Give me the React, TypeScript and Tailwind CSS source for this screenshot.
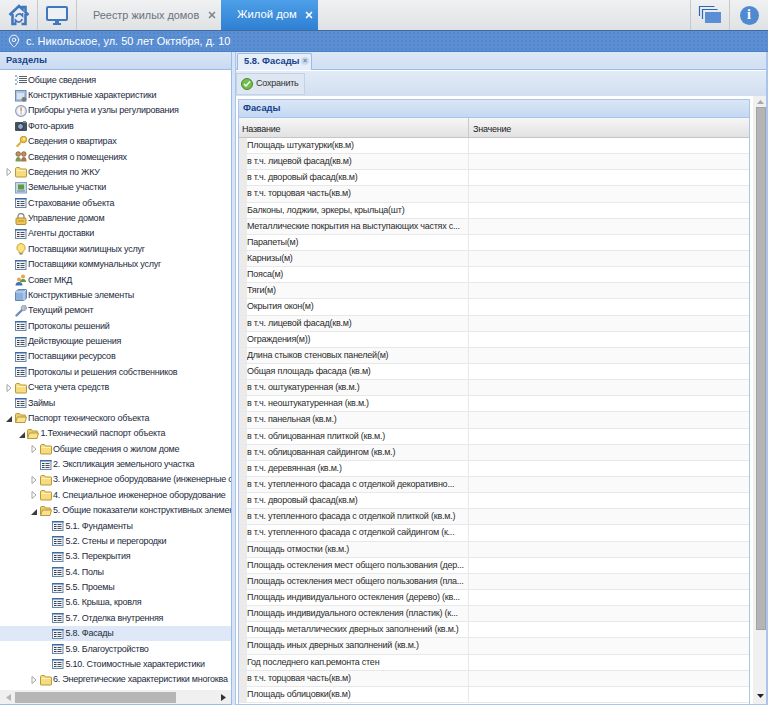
import { MapPin, X } from "lucide-react";

type IconKind =
  | "list" | "specs" | "meter" | "photo" | "key" | "people" | "folder" | "open" | "land"
  | "form" | "lock" | "bulb" | "users" | "cube" | "wrench";

type TreeRow = { label: string; icon: IconKind; level: number; arrow?: "closed" | "open"; selected?: boolean };

const treeRows: TreeRow[] = [
  { label: "Общие сведения", icon: "list", level: 0 },
  { label: "Конструктивные характеристики", icon: "specs", level: 0 },
  { label: "Приборы учета и узлы регулирования", icon: "meter", level: 0 },
  { label: "Фото-архив", icon: "photo", level: 0 },
  { label: "Сведения о квартирах", icon: "key", level: 0 },
  { label: "Сведения о помещениях", icon: "people", level: 0 },
  { label: "Сведения по ЖКУ", icon: "folder", level: 0, arrow: "closed" },
  { label: "Земельные участки", icon: "land", level: 0 },
  { label: "Страхование объекта", icon: "form", level: 0 },
  { label: "Управление домом", icon: "lock", level: 0 },
  { label: "Агенты доставки", icon: "form", level: 0 },
  { label: "Поставщики жилищных услуг", icon: "bulb", level: 0 },
  { label: "Поставщики коммунальных услуг", icon: "form", level: 0 },
  { label: "Совет МКД", icon: "users", level: 0 },
  { label: "Конструктивные элементы", icon: "cube", level: 0 },
  { label: "Текущий ремонт", icon: "wrench", level: 0 },
  { label: "Протоколы решений", icon: "form", level: 0 },
  { label: "Действующие решения", icon: "form", level: 0 },
  { label: "Поставщики ресурсов", icon: "form", level: 0 },
  { label: "Протоколы и решения собственников", icon: "form", level: 0 },
  { label: "Счета учета средств", icon: "folder", level: 0, arrow: "closed" },
  { label: "Займы", icon: "form", level: 0 },
  { label: "Паспорт технического объекта", icon: "open", level: 0, arrow: "open" },
  { label: "1.Технический паспорт объекта", icon: "open", level: 1, arrow: "open" },
  { label: "Общие сведения о жилом доме", icon: "folder", level: 2, arrow: "closed" },
  { label: "2. Экспликация земельного участка", icon: "form", level: 2 },
  // the next labels are cut by the panel edge in the real page
  { label: "3. Инженерное оборудование (инженерные с", icon: "folder", level: 2, arrow: "closed" },
  { label: "4. Специальное инженерное оборудование", icon: "folder", level: 2, arrow: "closed" },
  { label: "5. Общие показатели конструктивных элемен", icon: "open", level: 2, arrow: "open" },
  { label: "5.1. Фундаменты", icon: "form", level: 3 },
  { label: "5.2. Стены и перегородки", icon: "form", level: 3 },
  { label: "5.3. Перекрытия", icon: "form", level: 3 },
  { label: "5.4. Полы", icon: "form", level: 3 },
  { label: "5.5. Проемы", icon: "form", level: 3 },
  { label: "5.6. Крыша, кровля", icon: "form", level: 3 },
  { label: "5.7. Отделка внутренняя", icon: "form", level: 3 },
  { label: "5.8. Фасады", icon: "form", level: 3, selected: true },
  { label: "5.9. Благоустройство", icon: "form", level: 3 },
  { label: "5.10. Стоимостные характеристики", icon: "form", level: 3 },
  { label: "6. Энергетические характеристики многоква", icon: "folder", level: 2, arrow: "closed" },
];

const facadeRows = [
  "Площадь штукатурки(кв.м)",
  "в т.ч. лицевой фасад(кв.м)",
  "в т.ч. дворовый фасад(кв.м)",
  "в т.ч. торцовая часть(кв.м)",
  "Балконы, лоджии, эркеры, крыльца(шт)",
  "Металлические покрытия на выступающих частях с...",
  "Парапеты(м)",
  "Карнизы(м)",
  "Пояса(м)",
  "Тяги(м)",
  "Окрытия окон(м)",
  "в т.ч. лицевой фасад(кв.м)",
  "Ограждения(м))",
  "Длина стыков стеновых панелей(м)",
  "Общая площадь фасада (кв.м)",
  "в т.ч. оштукатуренная (кв.м.)",
  "в т.ч. неоштукатуренная (кв.м.)",
  "в т.ч. панельная (кв.м.)",
  "в т.ч. облицованная плиткой (кв.м.)",
  "в т.ч. облицованная сайдингом (кв.м.)",
  "в т.ч. деревянная (кв.м.)",
  "в т.ч. утепленного фасада с отделкой декоративно...",
  "в т.ч. дворовый фасад(кв.м)",
  "в т.ч. утепленного фасада с отделкой плиткой (кв.м.)",
  "в т.ч. утепленного фасада с отделкой сайдингом (к...",
  "Площадь отмостки (кв.м.)",
  "Площадь остекления мест общего пользования (дер...",
  "Площадь остекления мест общего пользования (пла...",
  "Площадь индивидуального остекления (дерево) (кв...",
  "Площадь индивидуального остекления (пластик) (к...",
  "Площадь металлических дверных заполнений (кв.м.)",
  "Площадь иных дверных заполнений (кв.м.)",
  "Год последнего кап.ремонта стен",
  "в т.ч. торцовая часть(кв.м)",
  "Площадь облицовки(кв.м)",
];

function NodeIcon({ kind }: { kind: IconKind }) {
  const box = "w-[12px] h-[12px] shrink-0";
  switch (kind) {
    case "list":
      return (
        <svg viewBox="0 0 12 12" className={box}>
          <path d="M0 2h2M2 4h1M0 6h2M2 8h1M0 10h2" stroke="#3f78bd" strokeWidth="1" />
          <path d="M4 2.500h8M4 4.500h8M4 6.500h8M4 8.500h8" stroke="#5b6066" strokeWidth="1" />
        </svg>
      );
    case "specs":
      return (
        <svg viewBox="0 0 12 12" className={box}>
          <rect x="0.500" y="0.500" width="10.500" height="10.500" fill="#a9c3e2" stroke="#6d8db5" />
          <rect x="2" y="3" width="7" height="6" fill="#d9e3ee" />
          <circle cx="9" cy="9.300" r="2.400" fill="#7b7b7b" />
        </svg>
      );
    case "meter":
      return (
        <svg viewBox="0 0 12 12" className={box}>
          <circle cx="6" cy="6" r="5.400" fill="#dfe7f2" stroke="#8c9db8" strokeWidth="1.100" />
          <circle cx="6" cy="6" r="3.400" fill="#f7f8fb" />
          <rect x="5.500" y="2.500" width="1.200" height="4" fill="#d8703a" />
          <rect x="5.500" y="7.500" width="1.200" height="1.200" fill="#d8703a" />
        </svg>
      );
    case "photo":
      return (
        <svg viewBox="0 0 12 12" className={box}>
          <rect x="0" y="2" width="12" height="9" rx="1" fill="#46525f" />
          <rect x="8" y="1" width="3" height="2" fill="#7d8894" />
          <circle cx="5.500" cy="6.500" r="3" fill="#8fa9c7" stroke="#22303f" />
        </svg>
      );
    case "key":
      return (
        <svg viewBox="0 0 12 12" className={box}>
          <circle cx="8.500" cy="3.500" r="3.200" fill="#f1c84c" stroke="#bf9223" />
          <circle cx="9" cy="3" r="0.900" fill="#fff6cf" />
          <path d="M6.500 5.500 1.500 10.500M2 9l1.500 1.500M3.500 7.500 5 9" stroke="#d8a92e" strokeWidth="1.700" />
        </svg>
      );
    case "people":
      return (
        <svg viewBox="0 0 12 12" className={box}>
          <circle cx="3.200" cy="3" r="2.300" fill="#c98f5d" stroke="#6a5238" strokeWidth="0.700" />
          <circle cx="8.800" cy="3" r="2.300" fill="#c98f5d" stroke="#6a5238" strokeWidth="0.700" />
          <path d="M0.500 10.500c0-3 1-4.500 2.700-4.500S6 7.500 6 10.500z" fill="#7a9a5a" />
          <path d="M6 10.500C6 7.500 7 6 8.800 6s2.700 1.500 2.700 4.500z" fill="#b0744a" />
        </svg>
      );
    case "folder":
      return (
        <svg viewBox="0 0 12 12" className={box}>
          <path d="M0.500 3v7.500c0 .3.200.500.500.500h10c.3 0 .5-.2.500-.5V3.500c0-.3-.2-.5-.5-.5H5.500l-1-1.500h-3C1 1.500.5 2 .5 3z" fill="#f7dc7e" stroke="#b9993f" />
          <path d="M1.500 4.500h9" stroke="#fff3c2" />
        </svg>
      );
    case "open":
      return (
        <svg viewBox="0 0 12 12" className={box}>
          <path d="M0.500 10V2.500c0-.5.3-1 1-1h3l1 1.500h4.500c.3 0 .5.200.5.500V5" fill="#eccd6a" stroke="#b9993f" />
          <path d="M0.500 10.500 2.500 5h9L10 10.500z" fill="#fae28c" stroke="#b9993f" />
        </svg>
      );
    case "land":
      return (
        <svg viewBox="0 0 12 12" className={box}>
          <rect x="0.500" y="0.500" width="11" height="10.500" fill="#c6d6e9" stroke="#8aa2c0" />
          <rect x="3" y="2.500" width="6" height="5" fill="#5f9a3c" />
          <path d="M2 9h8" stroke="#6d7f96" />
        </svg>
      );
    case "form":
      return (
        <svg viewBox="0 0 12 12" className={box}>
          <rect x="0.500" y="1.500" width="10.500" height="9" fill="#f0f3f8" stroke="#6d87a8" />
          <rect x="0" y="1" width="11.500" height="1.500" fill="#3b6ba5" />
          <path d="M2 4.500h2.500M2 6.500h2.500M2 8.500h2.500" stroke="#3a3f46" />
          <path d="M5.500 4.500h4M5.500 6.500h4M5.500 8.500h4" stroke="#4a5058" />
        </svg>
      );
    case "lock":
      return (
        <svg viewBox="0 0 12 12" className={box}>
          <path d="M3 5V3.500a3 3 0 0 1 6 0V5" fill="none" stroke="#8e8e8e" strokeWidth="1.400" />
          <rect x="1" y="5" width="10" height="6.500" rx="1" fill="#ecc659" stroke="#b38b2d" />
          <path d="M3 8h6" stroke="#b38b2d" />
        </svg>
      );
    case "bulb":
      return (
        <svg viewBox="0 0 12 12" className={box}>
          <path d="M6 0.500a4.300 4.300 0 0 0-2 8V10h4V8.500a4.300 4.300 0 0 0-2-8z" fill="#fbe27c" stroke="#c9a53c" />
          <rect x="4.500" y="10" width="3" height="1.600" fill="#8c8c8c" />
        </svg>
      );
    case "users":
      return (
        <svg viewBox="0 0 12 12" className={box}>
          <circle cx="8" cy="2.500" r="2" fill="#e8a24c" />
          <path d="M5 8c0-2 1.200-3 3-3s3 1 3 3z" fill="#5a9a42" />
          <circle cx="4" cy="5.500" r="2" fill="#e8a24c" />
          <path d="M0.500 11.500c0-2.500 1.500-3.500 3.500-3.500s3.500 1 3.500 3.500z" fill="#3d70b8" />
        </svg>
      );
    case "cube":
      return (
        <svg viewBox="0 0 12 12" className={box}>
          <path d="M0.500 3 3 0.500h8.500V9L9 11.500H.5z" fill="#8db1dc" stroke="#5f86b8" />
          <path d="M0.500 3H9v8.500M9 3l2.500-2.500" fill="none" stroke="#cddff2" />
        </svg>
      );
    case "wrench":
      return (
        <svg viewBox="0 0 12 12" className={box}>
          <path d="M1.500 10.500 7 5" stroke="#6d8db8" strokeWidth="2.400" strokeLinecap="round" />
          <path d="M7 5a2.800 2.800 0 0 1 4-4L9 3l.5.500 2-1.500A2.800 2.800 0 0 1 7 5z" fill="#b9c4d2" stroke="#7a8796" strokeWidth="0.600" />
        </svg>
      );
  }
}

function Arrow({ state }: { state?: "closed" | "open" }) {
  if (state === "closed") {
    return (
      <svg viewBox="0 0 6 8" className="w-[6px] h-[8px] shrink-0">
        <path d="M1 .5v7L5 4z" fill="#fff" stroke="#a3a3a3" />
      </svg>
    );
  }
  if (state === "open") {
    return (
      <svg viewBox="0 0 6 6" className="w-[6px] h-[6px] shrink-0 mt-[2px]">
        <path d="M6 0v6H0z" fill="#3c3c3c" />
      </svg>
    );
  }
  return <span className="w-[6px] shrink-0" />;
}

const levelPad = ["pl-[6px]", "pl-[18.5px]", "pl-[31px]", "pl-[43.5px]"];

function TreeLine({ row }: { row: TreeRow }) {
  return (
    <div className={`h-[15.38px] flex items-center whitespace-nowrap ${levelPad[row.level]} ${row.selected ? "bg-[#dfe8f6]" : ""}`}>
      <Arrow state={row.arrow} />
      <span className="ml-[2.500px] flex items-center">
        <NodeIcon kind={row.icon} />
      </span>
      <span className="ml-[1.500px] text-[#1c2a3d]">{row.label}</span>
    </div>
  );
}

export default function App() {
  return (
    <div className="w-[768px] h-[705px] overflow-hidden flex flex-col bg-white text-[9px] tracking-[-0.24px] leading-none font-['Liberation_Sans',sans-serif] text-[#222]">
      {/* top tabs */}
      <div className="h-[30px] shrink-0 flex bg-gradient-to-b from-[#f0f1f2] to-[#dfe2e4] text-[11.3px] tracking-normal">
        <button className="w-[38px] border-r border-[#c6c8ca] flex items-center justify-center">
          <svg viewBox="0 0 22 22" className="w-[22px] h-[22px]">
            <path d="M1.500 11 11 2l3.500 3.300V3h3v5.300l3 2.700M4.500 10v10h4M13.500 20h4V10" fill="none" stroke="#3f78bd" strokeWidth="2.600" />
            <path d="M8 13a3.200 3.200 0 0 1 5.500-2l1 1V9M14 15a3.200 3.200 0 0 1-5.500 2l-1-1v3" fill="none" stroke="#3f78bd" strokeWidth="1.700" />
          </svg>
        </button>
        <button className="w-[39px] border-r border-[#c6c8ca] flex items-center justify-center">
          <svg viewBox="0 0 22 19" className="w-[22px] h-[19px]">
            <rect x="1" y="1" width="20" height="13" rx="1" fill="#edf1f5" stroke="#3f78bd" strokeWidth="2" />
            <path d="M9 15h4v2h2v2H7v-2h2z" fill="#3f78bd" />
          </svg>
        </button>
        <div className="w-[144px] flex items-center pl-[16px] text-[#69737d] text-[10.9px]">
          <span className="w-[114px] whitespace-nowrap">Реестр жилых домов</span>
          <X className="w-[10px] h-[10px] text-[#7c8791]" strokeWidth={4} />
        </div>
        <div className="w-[97px] flex items-center pl-[16px] text-white bg-gradient-to-b from-[#4d9fe8] to-[#2f80d2]">
          <span className="w-[67px] whitespace-nowrap">Жилой дом</span>
          <X className="w-[10px] h-[10px]" strokeWidth={4} />
        </div>
        <div className="flex-1" />
        <button className="w-[39px] border-l border-[#c6c8ca] flex items-center justify-center">
          <svg viewBox="0 0 24 20" className="w-[24px] h-[20px]">
            <path d="M1.500 11V1.500h15M4.500 14V4.500h15" fill="none" stroke="#2f68b5" strokeWidth="1.200" />
            <rect x="7" y="7" width="16" height="11" fill="#5a8fd6" />
          </svg>
        </button>
        <button className="w-[39px] border-l border-[#c6c8ca] flex items-center justify-center">
          <span className="w-[19px] h-[19px] rounded-full bg-[#4f8ad0] text-white font-bold font-['Liberation_Serif',serif] text-[14px] flex items-center justify-center">
            i
          </span>
        </button>
      </div>

      {/* address */}
      <div className="h-[22px] shrink-0 flex items-center gap-[5px] pl-[7px] border-t border-[#44689c] border-b-[#4a7fc4] border-b bg-[#5b8fd4] bg-[radial-gradient(#5486ca_1px,transparent_1px)] bg-[length:4px_4px] text-white text-[11px] tracking-normal">
        <MapPin className="w-[14px] h-[14px]" strokeWidth={1.600} />
        <span>с. Никольское, ул. 50 лет Октября, д. 10</span>
      </div>

      <div className="flex-1 min-h-0 flex bg-[#cfdff3]">
        {/* left panel */}
        <div className="w-[232px] shrink-0 flex flex-col border-r border-[#99bbe8] border-b bg-white">
          <div className="h-[18px] shrink-0 flex items-center pl-[6px] pt-[1px] font-bold text-[9.3px] tracking-normal text-[#15428b] border-b border-[#99bbe8] bg-gradient-to-b from-[#dae6f6] to-[#c9daf0]">
            Разделы
          </div>
          <div className="flex-1 min-h-0 overflow-hidden pt-[2.500px]">
            {treeRows.map((row) => (
              <TreeLine key={row.label} row={row} />
            ))}
          </div>
          <div className="h-[14px] shrink-0 flex items-center bg-[#f0f0f0] pl-[6px] pr-[5px] gap-[4px]">
            <svg viewBox="0 0 5 7" className="w-[5px] h-[7px] shrink-0"><path d="M5 0v7L0 3.500z" fill="#b5b5b5" /></svg>
            <div className="w-[161px] h-[11px] bg-[#b6b6b6]" />
            <div className="flex-1" />
            <svg viewBox="0 0 5 7" className="w-[5px] h-[7px] shrink-0"><path d="M0 0v7l5-3.500z" fill="#333" /></svg>
          </div>
        </div>

        {/* splitter */}
        <div className="w-[3px] shrink-0 bg-[#d6e4f5]" />

        {/* right panel */}
        <div className="flex-1 min-w-0 flex flex-col bg-white border-l border-r-2 border-b border-[#a9c5ea]">
          <div className="h-[18px] shrink-0 flex items-end bg-gradient-to-b from-[#dce7f6] to-[#d2e0f2] border-b border-[#99bbe8] pl-[1px]">
            <div className="h-[17px] w-[75px] -mb-[1px] flex items-center justify-between pl-[6px] pr-[2px] font-bold text-[9.3px] tracking-normal whitespace-nowrap text-[#15428b] bg-[#e6eef9] border border-b-0 border-[#99bbe8] rounded-t-[2px]">
              5.8. Фасады
              <span className="text-[7px] w-[8px] h-[8px] mb-[3px] rounded-full bg-[#cdd9ea] text-[#6c7e96] flex items-center justify-center">×</span>
            </div>
          </div>
          <div className="h-[25px] shrink-0 mt-[1px] flex items-center bg-gradient-to-b from-[#e2ebf7] to-[#d2dff0]">
            <button className="h-[22px] w-[69px] flex items-center gap-[3px] pl-[4px] border border-[#c3d3e7] bg-[#dde6f1] text-[#333]">
              <span className="w-[12px] h-[12px] shrink-0 rounded-full bg-[#6fbd4a] border border-[#4c8b32] flex items-center justify-center">
                <svg viewBox="0 0 8 8" className="w-[8px] h-[8px]"><path d="M1 4l2 2 4-4.500" fill="none" stroke="#fff" strokeWidth="1.500" /></svg>
              </span>
              Сохранить
            </button>
          </div>

          <div className="flex-1 min-h-0 flex pl-[2px] pt-[3px]">
            <div className="w-[512px] shrink-0 flex flex-col border border-b-0 border-[#a9c5ea]">
              <div className="h-[18px] shrink-0 flex items-center pl-[4px] font-bold text-[9.3px] tracking-normal text-[#15428b] bg-gradient-to-b from-[#dae6f6] to-[#c4d8f2] border-b border-[#a9c5ea]">
                Фасады
              </div>
              <div className="h-[20px] shrink-0 flex items-center bg-gradient-to-b from-[#f6f6f6] to-[#e2e2e2] border-b border-[#c5c5c5] text-[#222]">
                <div className="w-[229px] pl-[3px] pt-[3px]">Название</div>
                <div className="pl-[4px] pt-[3px] border-l border-[#c9c9c9] h-full flex items-center">Значение</div>
              </div>
              <div className="flex-1 min-h-0 overflow-hidden">
                {facadeRows.map((name, i) => (
                  <div key={i} className={`h-[16.15px] flex border-b border-[#e8e8e8] ${i % 2 === 1 ? "bg-[#fafafa]" : "bg-white"}`}>
                    <div className="w-[8px] shrink-0 bg-[#ebebeb]" />
                    <div className="w-[221px] shrink-0 flex items-center whitespace-nowrap overflow-hidden text-[#2b2b2b]">
                      {name}
                    </div>
                    <div className="flex-1 border-l border-[#e8e8e8]" />
                  </div>
                ))}
              </div>
            </div>

            {/* grid scrollbar */}
            <div className="w-[13px] ml-[3px] shrink-0 flex flex-col items-center bg-[#f0f0f0] pt-[1px] pb-[3px] pl-[2px] -mt-[3px]">
              <svg viewBox="0 0 7 4" className="w-[7px] h-[4px] shrink-0 mt-[3px]"><path d="M3.500 0 7 4H0z" fill="#a8a8a8" /></svg>
              <div className="w-[10px] h-[523px] mt-[3px] bg-[#b4b4b4] border border-[#a3a3a3]" />
              <div className="flex-1" />
              <svg viewBox="0 0 7 4" className="w-[7px] h-[4px] shrink-0 mb-[3px]"><path d="M0 0h7L3.500 4z" fill="#222" /></svg>
            </div>
          </div>
        </div>
      </div>
    </div>
  );
}
